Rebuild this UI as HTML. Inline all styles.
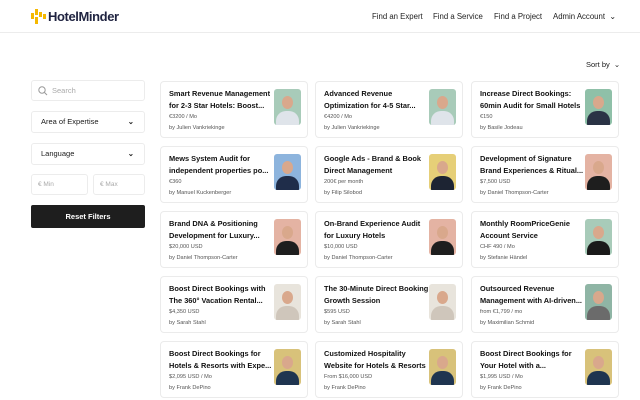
<!DOCTYPE html><html><head><meta charset="utf-8"><style>
*{box-sizing:border-box;margin:0;padding:0}
body{width:640px;height:400px;overflow:hidden;background:#fff;font-family:"Liberation Sans",Arial,sans-serif;color:#1a1a1a;position:relative}
.hdr{position:absolute;left:0;top:0;width:640px;height:33px;border-bottom:1px solid #ececec}
.logo{position:absolute;left:48px;top:9px;font-size:13px;font-weight:bold;color:#1f2340;letter-spacing:-0.4px}
.nav{position:absolute;top:12px;font-size:7.8px;color:#222}
.sort{position:absolute;left:586px;top:60px;font-size:7.5px}
.box{position:absolute;border:1px solid #ececec;border-radius:3px;font-size:7.5px;background:#fff}
.btn{position:absolute;left:31px;top:205px;width:114px;height:23px;background:#1e1e1e;border-radius:2px;color:#fff;font-size:7.5px;font-weight:bold;text-align:center;line-height:23px}
.card{position:absolute;width:148px;height:57px;border:1px solid #ebebeb;border-radius:4px;background:#fff}
.t{position:absolute;left:8px;top:6px;width:105px;font-size:7.4px;font-weight:bold;line-height:11.5px;color:#111;display:-webkit-box;-webkit-line-clamp:2;-webkit-box-orient:vertical;overflow:hidden;height:23px}
.p{position:absolute;left:8px;top:32px;font-size:5.6px;color:#555}
.b{position:absolute;left:8px;top:43px;font-size:5.6px;color:#555}
.ph{position:absolute;left:113px;top:7px;width:27px;height:36px;border-radius:3px;overflow:hidden}
.hd{position:absolute;left:8px;top:7px;width:11px;height:13px;border-radius:50%;background:#d9a88c}
.bd{position:absolute;left:2px;top:22px;width:23px;height:18px;border-radius:10px 10px 0 0}
</style></head><body>
<div class="hdr">
<svg style="position:absolute;left:31px;top:9px" width="15" height="15" viewBox="0 0 15 15"><rect x="0" y="4" width="3" height="6" fill="#f5b800"/><rect x="4" y="0" width="3" height="6" fill="#f5b800"/><rect x="4" y="8" width="3" height="7" fill="#f5b800"/><rect x="8" y="3" width="3" height="5" fill="#f5b800"/><rect x="12" y="5" width="3" height="5" fill="#f5b800"/></svg>
<div class="logo">HotelMinder</div>
<div class="nav" style="left:372px">Find an Expert</div>
<div class="nav" style="left:433px">Find a Service</div>
<div class="nav" style="left:494px">Find a Project</div>
<div class="nav" style="left:553px">Admin Account &nbsp;⌄</div>
</div>
<div class="sort">Sort by &nbsp;⌄</div>
<div class="box" style="left:31px;top:80px;width:114px;height:21px;color:#aaa;line-height:19px;padding-left:20px">Search
<svg style="position:absolute;left:6px;top:5px" width="10" height="10" viewBox="0 0 10 10"><circle cx="4" cy="4" r="3.2" fill="none" stroke="#999" stroke-width="1"/><line x1="6.4" y1="6.4" x2="9" y2="9" stroke="#999"/></svg></div>
<div class="box" style="left:31px;top:111px;width:114px;height:22px;line-height:20px;padding-left:9px">Area of Expertise<span style="position:absolute;right:10px;font-weight:bold">⌄</span></div>
<div class="box" style="left:31px;top:143px;width:114px;height:22px;line-height:20px;padding-left:9px">Language<span style="position:absolute;right:10px;font-weight:bold">⌄</span></div>
<div class="box" style="left:31px;top:174px;width:57px;height:21px;line-height:19px;padding-left:6px;color:#aaa;font-size:6.5px">€ Min</div>
<div class="box" style="left:93px;top:174px;width:52px;height:21px;line-height:19px;padding-left:6px;color:#aaa;font-size:6.5px">€ Max</div>
<div class="btn">Reset Filters</div>
<div id="g"></div>
<script>
var d=[
["Smart Revenue Management for 2-3 Star Hotels: Boost...","€3200 / Mo","Julien Vankriekinge","#a8cbb9","#dfe4ea"],
["Advanced Revenue Optimization for 4-5 Star...","€4200 / Mo","Julien Vankriekinge","#a8cbb9","#dfe4ea"],
["Increase Direct Bookings: 60min Audit for Small Hotels","€150","Basile Jodeau","#8fc0a8","#2a3345"],
["Mews System Audit for independent properties po...","€360","Manuel Kuckenberger","#8db4dd","#1f2d4a"],
["Google Ads - Brand &amp; Book Direct Management","200€ per month","Filip Silobod","#e6cf78","#1d2433"],
["Development of Signature Brand Experiences &amp; Ritual...","$7,500 USD","Daniel Thompson-Carter","#e4b3a3","#1e1e1e"],
["Brand DNA &amp; Positioning Development for Luxury...","$20,000 USD","Daniel Thompson-Carter","#e4b3a3","#1e1e1e"],
["On-Brand Experience Audit for Luxury Hotels","$10,000 USD","Daniel Thompson-Carter","#e4b3a3","#1e1e1e"],
["Monthly RoomPriceGenie Account Service","CHF 490 / Mo","Stefanie Händel","#a8cbb9","#1a1a1a"],
["Boost Direct Bookings with The 360° Vacation Rental...","$4,350 USD","Sarah Stahl","#e8e4dc","#cfc6bb"],
["The 30-Minute Direct Booking Growth Session","$595 USD","Sarah Stahl","#e8e4dc","#cfc6bb"],
["Outsourced Revenue Management with AI-driven...","from €1,799 / mo","Maximilian Schmid","#8fb5a5","#6b6b6b"],
["Boost Direct Bookings for Hotels &amp; Resorts with Expe...","$2,095 USD / Mo","Frank DePino","#d8c27a","#1f3550"],
["Customized Hospitality Website for Hotels &amp; Resorts","From $16,000 USD","Frank DePino","#d8c27a","#1f3550"],
["Boost Direct Bookings for Your Hotel with a...","$1,995 USD / Mo","Frank DePino","#d8c27a","#1f3550"]];
var xs=[160,315,471],h="";
d.forEach(function(c,i){var x=xs[i%3],y=81+65*Math.floor(i/3);
h+='<div class="card" style="left:'+x+'px;top:'+y+'px"><div class="t">'+c[0]+'</div><div class="p">'+c[1]+'</div><div class="b">by '+c[2]+'</div><div class="ph" style="background:'+c[3]+'"><div class="bd" style="background:'+c[4]+'"></div><div class="hd"></div></div></div>';});
document.getElementById("g").innerHTML=h;
</script>
</body></html>
